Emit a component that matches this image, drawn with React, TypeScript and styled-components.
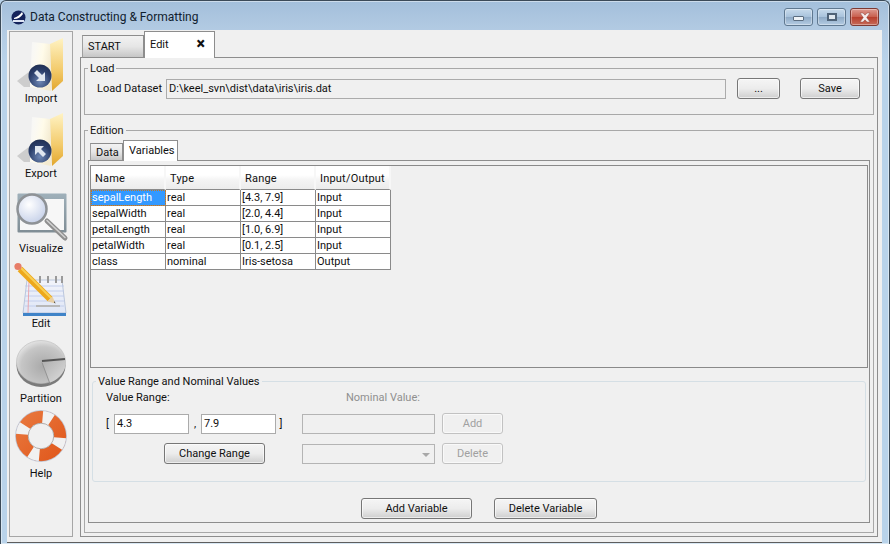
import styled, { createGlobalStyle } from "styled-components";

const FONT = `Roboto, "Noto Sans", "Liberation Sans", sans-serif`;

const GlobalStyle = createGlobalStyle`
  html, body {
    margin: 0;
    padding: 0;
    background: #b9d2e9;
  }
  * {
    box-sizing: border-box;
  }
`;

const Frame = styled.div`
  width: 890px;
  height: 544px;
  overflow: hidden;
  display: flex;
  flex-direction: column;
  font-family: ${FONT};
  font-size: 11px;
  color: #101010;
  background: linear-gradient(180deg, #a3bfdb 0, #b3cbe3 30px, #b9d3ea 60px);
  border: 1px solid #3b4a58;
  border-bottom: 0;
  border-radius: 6px 6px 0 0;
  box-shadow: inset 0 0 0 1px rgba(255, 255, 255, 0.45);
`;

const TitleBar = styled.div`
  height: 29px;
  flex: none;
  display: flex;
  align-items: center;
  padding: 3px 10px 0 10px;
  gap: 4px;
`;

const TitleText = styled.span`
  font-size: 12px;
  color: #10202e;
  flex: 1;
`;

const Caption = styled.div`
  display: flex;
  gap: 4px;
`;

const CaptionButton = styled.div<{ $close?: boolean }>`
  width: 29px;
  height: 18px;
  display: flex;
  align-items: center;
  justify-content: center;
  border: 1px solid ${(p) => (p.$close ? "#7d3a33" : "#5f7890")};
  border-radius: 3px;
  background: ${(p) =>
    p.$close
      ? "linear-gradient(180deg, #dd9a90 0, #c9604f 48%, #b83f2d 52%, #c66a58 100%)"
      : "linear-gradient(180deg, #c8dbec 0, #a9c3dc 48%, #8faac6 52%, #b4cce3 100%)"};
  box-shadow: inset 0 0 0 1px rgba(255, 255, 255, 0.35);
`;

const MinGlyph = styled.div`
  width: 11px;
  height: 5px;
  margin-top: 3px;
  background: #eef3f7;
  border: 1px solid #5b6d80;
  border-radius: 1px;
`;

const MaxGlyph = styled.div`
  width: 10px;
  height: 8px;
  background: #dfe8f0;
  border: 2px solid #4f6378;
`;

const Content = styled.div`
  flex: 1;
  margin: 0 7px 1px 6px;
  background: #f0f0f0;
  display: flex;
  gap: 7px;
  padding: 1px 4px 5px 2px;
  border-bottom: 1px solid #5d5d5d;
  min-height: 0;
`;

const Sidebar = styled.nav`
  width: 64px;
  flex: none;
  border: 1px solid #a6a6a6;
  padding-top: 5px;
  display: flex;
  flex-direction: column;
`;

const SideItem = styled.div`
  height: 75px;
  flex: none;
  display: flex;
  flex-direction: column;
  align-items: center;
`;

const SideIcon = styled.svg`
  width: 58px;
  height: 56px;
  flex: none;
  overflow: visible;
  margin-bottom: -1px;
`;

const SideLabel = styled.span`
  height: 13px;
  line-height: 13px;
`;

const Main = styled.div`
  flex: 1;
  min-width: 0;
  display: flex;
  flex-direction: column;
`;

const TabStrip = styled.div`
  height: 27px;
  flex: none;
  padding-left: 2px;
  display: flex;
  align-items: flex-end;
  margin-bottom: -1px;
  position: relative;
  z-index: 1;
`;

const Tab = styled.div<{ $active?: boolean; $w: number; $h: number }>`
  width: ${(p) => p.$w}px;
  height: ${(p) => p.$h}px;
  display: flex;
  align-items: center;
  justify-content: space-between;
  padding: 0 9px ${(p) => (p.$active ? 2 : 0)}px 5px;
  border: 1px solid #8d8d8d;
  border-bottom: ${(p) => (p.$active ? "0" : "1px solid #8d8d8d")};
  border-left: ${(p) => (p.$active ? "1px solid #8d8d8d" : "1px solid #a0a0a0")};
  background: ${(p) =>
    p.$active ? "#ffffff" : "linear-gradient(180deg, #f2f2f2 0, #e6e6e6 50%, #c6c6c6 100%)"};
`;

const CloseMark = styled.span`
  font-weight: 900;
  font-size: 16px;
  line-height: 1;
`;

const Pane = styled.div`
  flex: 1;
  min-height: 0;
  border: 1px solid #8d8d8d;
  padding: 2px 3px 3px;
  display: flex;
  flex-direction: column;
`;

const Group = styled.fieldset<{ $h?: number }>`
  margin: 0;
  padding: 0;
  min-width: 0;
  border: 1px solid #a8a8a8;
  ${(p) => (p.$h ? `height: ${p.$h}px; flex: none;` : "flex: 1; min-height: 0;")}
`;

const Legend = styled.legend`
  padding: 2px 2px 0;
  margin-left: 3px;
  line-height: 14px;
`;

const LoadRow = styled.div`
  display: flex;
  align-items: center;
  padding: 2px 13px 0 12px;
  height: 23px;
`;

const LoadLabel = styled.label`
  width: 69px;
  flex: none;
  white-space: nowrap;
`;

const PathBox = styled.div`
  flex: 1;
  height: 20px;
  line-height: 18px;
  padding-left: 2px;
  background: #f0f0f0;
  border: 1px solid #ababab;
  margin-right: 11px;
`;

const Button = styled.button<{ $w: number; $disabled?: boolean; $gap?: number }>`
  width: ${(p) => p.$w}px;
  height: 21px;
  flex: none;
  padding: 0;
  margin-right: ${(p) => p.$gap ?? 0}px;
  font-family: ${FONT};
  font-size: 11px;
  color: ${(p) => (p.$disabled ? "#a0a0a0" : "#101010")};
  border: 1px solid ${(p) => (p.$disabled ? "#c2c2c2" : "#777777")};
  border-radius: 3px;
  background: ${(p) =>
    p.$disabled ? "#f0f0f0" : "linear-gradient(180deg, #f5f5f5 0, #ececec 50%, #cfcfcf 100%)"};
  box-shadow: inset 0 0 0 1px rgba(255, 255, 255, 0.6);
`;

const EditionBody = styled.div`
  height: calc(100% - 5px);
  padding: 2px 3px 4px 3px;
  display: flex;
  flex-direction: column;
`;

const InnerStrip = styled.div`
  height: 21px;
  flex: none;
  padding-left: 2px;
  display: flex;
  align-items: flex-end;
  margin-bottom: -1px;
  position: relative;
  z-index: 1;
`;

const InnerPane = styled.div`
  flex: 1;
  min-height: 0;
  border: 1px solid #8d8d8d;
  padding: 4px 1px 0 1px;
  display: flex;
  flex-direction: column;
`;

const TableArea = styled.div`
  height: 203px;
  flex: none;
  border: 1px solid #8a8a8a;
`;

const VarGrid = styled.div`
  display: grid;
  grid-template-columns: repeat(4, 75px);
  grid-template-rows: 24px repeat(5, 16px);
  width: 300px;
`;

const HeadCell = styled.div`
  padding: 0 4px;
  line-height: 25px;
  letter-spacing: 0.2px;
  background: linear-gradient(180deg, #ffffff 0, #ffffff 40%, #f4f4f4 60%, #ececec 100%);
  border-right: 2px solid #f7f7f7;
  border-bottom: 1px solid #8a8a8a;
`;

const Cell = styled.div<{ $selected?: boolean }>`
  line-height: 15px;
  padding-left: 1px;
  background: ${(p) => (p.$selected ? "#3399ff" : "#ffffff")};
  color: ${(p) => (p.$selected ? "#ffffff" : "#101010")};
  border-right: 1px solid #8a8a8a;
  border-bottom: 1px solid #8a8a8a;
  outline: ${(p) => (p.$selected ? "1px dotted #c8761a" : "none")};
  outline-offset: -1px;
`;

const RangeGroup = styled.fieldset`
  margin: 5px 2px 0 2px;
  padding: 0;
  height: 109px;
  flex: none;
  min-width: 0;
  border: 1px solid #d5dfe5;
  border-radius: 3px;
`;

const RangeLegend = styled.legend`
  padding: 2px 2px 0;
  margin-left: 3px;
  line-height: 14px;
`;

const RangeRow = styled.div<{ $h: number; $mt?: number }>`
  height: ${(p) => p.$h}px;
  margin-top: ${(p) => p.$mt ?? 0}px;
  display: flex;
  align-items: center;
  padding-left: 13px;
`;

const FieldLabel = styled.span<{ $w: number; $muted?: boolean }>`
  width: ${(p) => p.$w}px;
  color: ${(p) => (p.$muted ? "#8f8f8f" : "#101010")};
  flex: none;
`;

const Bracket = styled.span<{ $w: number; $align?: string }>`
  width: ${(p) => p.$w}px;
  flex: none;
  text-align: ${(p) => p.$align ?? "center"};
`;

const ValueInput = styled.div`
  width: 75px;
  height: 20px;
  flex: none;
  line-height: 18px;
  padding-left: 2px;
  background: #ffffff;
  border: 1px solid #ababab;
`;

const DisabledField = styled.div`
  width: 133px;
  height: 20px;
  flex: none;
  margin-right: 7px;
  position: relative;
  background: #f0f0f0;
  border: 1px solid #b4b4b4;
`;

const ComboArrow = styled.span`
  position: absolute;
  right: 4px;
  top: 8px;
  width: 0;
  height: 0;
  border-left: 4px solid transparent;
  border-right: 4px solid transparent;
  border-top: 4px solid #a8a8a8;
`;

const Spacer = styled.div<{ $w: number }>`
  width: ${(p) => p.$w}px;
  flex: none;
`;

const GroupGap = styled.div`
  height: 7px;
  flex: none;
`;

const Footer = styled.div`
  display: flex;
  padding: 16px 0 0 271px;
  gap: 22px;
`;

const rows = [
  ["sepalLength", "real", "[4.3, 7.9]", "Input"],
  ["sepalWidth", "real", "[2.0, 4.4]", "Input"],
  ["petalLength", "real", "[1.0, 6.9]", "Input"],
  ["petalWidth", "real", "[0.1, 2.5]", "Input"],
  ["class", "nominal", "Iris-setosa", "Output"],
];

const AppLogo = () => (
  <svg width="15" height="15" viewBox="0 0 15 15">
    <circle cx="7.5" cy="7.5" r="7" fill="#14235c" />
    <path d="M3 8 C6 7 9 5 11 2 L12 4 C10 7 7 9 3 9 Z" fill="#ffffff" />
    <rect x="2" y="10" width="11" height="2" fill="#dfe6f5" />
  </svg>
);

const FolderIcon = ({ top, flip }: { top: number; flip?: boolean }) => {
  const id = flip ? "e" : "i";
  const y = (v: number) => v + top;
  return (
    <SideIcon viewBox={`12 ${top} 58 56`}>
      <defs>
        <linearGradient id={`${id}f`} x1="0" y1="0" x2="0" y2="1">
          <stop offset="0" stopColor="#fff3c4" />
          <stop offset="0.6" stopColor="#f3cb6c" />
          <stop offset="1" stopColor="#e2a62c" />
        </linearGradient>
        <linearGradient id={`${id}p`} x1="0" y1="0" x2="1" y2="0.4">
          <stop offset="0" stopColor="#ffffff" stopOpacity="0.4" />
          <stop offset="0.6" stopColor="#fffbe9" />
          <stop offset="1" stopColor="#f3ead0" />
        </linearGradient>
        <radialGradient id={`${id}c`} cx="0.5" cy="0.75" r="0.8">
          <stop offset="0" stopColor="#6f88b5" />
          <stop offset="0.6" stopColor="#2b3f6b" />
          <stop offset="1" stopColor="#1d2c4e" />
        </radialGradient>
      </defs>
      <path d={`M17 ${y(44)} L30 ${y(34)} L30 ${y(50)} L24 ${y(50)} Z`} fill="#bdbdbd" opacity="0.7" />
      <path d={`M32 ${y(5)} L50 ${y(7)} L51 ${y(54)} L30 ${y(50)} Z`} fill={`url(#${id}p)`} />
      <path d={`M50 ${y(7)} L63 ${y(1)} L63 ${y(44)} L52 ${y(54)} Z`} fill={`url(#${id}f)`} />
      <circle cx="40" cy={y(39)} r="11.5" fill={`url(#${id}c)`} />
      <g transform={`translate(40 ${y(39)}) rotate(${flip ? 180 : 0})`}>
        <path d="M-6 -3 L-3 -6 L2 -1 L5 -4 L5 5 L-4 5 L-1 2 Z" fill="#dfe6ef" />
      </g>
    </SideIcon>
  );
};

const MagnifierIcon = () => (
  <SideIcon viewBox="12 186 58 56">
    <defs>
      <radialGradient id="lens" cx="0.4" cy="0.35" r="0.7">
        <stop offset="0" stopColor="#ffffff" />
        <stop offset="1" stopColor="#c4cfe8" />
      </radialGradient>
      <linearGradient id="win" x1="0" y1="0" x2="0" y2="1">
        <stop offset="0" stopColor="#9fb0ba" />
        <stop offset="1" stopColor="#7f8d95" />
      </linearGradient>
    </defs>
    <rect x="17.5" y="192.5" width="49" height="39" fill="url(#win)" rx="1" />
    <rect x="20" y="198" width="44" height="31" fill="#f7f7f7" />
    <line x1="47" y1="220" x2="65" y2="237" stroke="#8f8f8f" strokeWidth="5" strokeLinecap="round" />
    <line x1="47" y1="219.5" x2="65" y2="236.5" stroke="#d0d0d0" strokeWidth="1.6" strokeLinecap="round" />
    <circle cx="32" cy="208" r="14.5" fill="url(#lens)" stroke="#8e9296" strokeWidth="2.5" />
  </SideIcon>
);

const NotepadIcon = () => (
  <SideIcon viewBox="12 261 58 56">
    <defs>
      <linearGradient id="pad" x1="0" y1="0" x2="0" y2="1">
        <stop offset="0" stopColor="#f2f4fa" />
        <stop offset="1" stopColor="#dfe6f6" />
      </linearGradient>
    </defs>
    <path d="M27 279 L62 279 L66 312 L23 312 Z" fill="url(#pad)" stroke="#a5b4d0" strokeWidth="0.7" />
    <path d="M23 312 L66 312 L66 315 L23 315 Z" fill="#3f83c8" />
    {[285, 290, 295, 300, 305].map((v) => (
      <line key={v} x1="25" y1={v} x2="64" y2={v} stroke="#b9c6ea" strokeWidth="0.8" />
    ))}
    <line x1="29" y1="279" x2="28" y2="312" stroke="#eba0a6" strokeWidth="0.9" />
    {[40, 48, 56, 62].map((v) => (
      <line key={v} x1={v} y1="275" x2={v} y2="282" stroke="#9a9a9a" strokeWidth="2" />
    ))}
    <line x1="36" y1="305" x2="60" y2="305" stroke="#b8b8b8" strokeWidth="2" />
    <line x1="20" y1="268" x2="50" y2="298" stroke="#eda81c" strokeWidth="6.5" />
    <line x1="21" y1="267" x2="51" y2="297" stroke="#f8cf54" strokeWidth="2" />
    <path d="M47.5 300.5 L52.5 295.5 L55.5 302.5 Z" fill="#e8cfa5" />
    <path d="M54 301.5 L55.5 302.5 L54.5 300 Z" fill="#333333" />
    <circle cx="18" cy="265.5" r="3.6" fill="#e77d68" />
  </SideIcon>
);

const PieIcon = () => (
  <SideIcon viewBox="12 336 58 56">
    <defs>
      <radialGradient id="pie" cx="0.55" cy="0.6" r="0.65">
        <stop offset="0" stopColor="#a9a9a9" />
        <stop offset="0.7" stopColor="#c6c6c6" />
        <stop offset="1" stopColor="#ececec" />
      </radialGradient>
      <linearGradient id="slice" x1="0" y1="0" x2="1" y2="1">
        <stop offset="0" stopColor="#aeaeae" />
        <stop offset="1" stopColor="#dedede" />
      </linearGradient>
    </defs>
    <ellipse cx="41" cy="364.5" rx="24.5" ry="21.5" fill="#7b7b7b" />
    <ellipse cx="41" cy="361" rx="24.5" ry="21.5" fill="url(#pie)" stroke="#b8b8b8" strokeWidth="0.6" />
    <path d="M42 361 L65.5 359 A24.5 21.5 0 0 1 50 381.5 Z" fill="url(#slice)" />
    <path d="M42 360 L65 358" stroke="#555555" strokeWidth="2.2" />
    <path d="M42 361.5 L50 383" stroke="#8c8c8c" strokeWidth="0.8" />
  </SideIcon>
);

const BuoyIcon = () => (
  <SideIcon viewBox="12 411 58 56">
    <defs>
      <linearGradient id="ring" x1="0" y1="0" x2="1" y2="1">
        <stop offset="0" stopColor="#e8763c" />
        <stop offset="1" stopColor="#e15a1e" />
      </linearGradient>
    </defs>
    <circle cx="41" cy="435" r="19" fill="none" stroke="url(#ring)" strokeWidth="12.5" />
    {[5, 95, 185, 275].map((a) => (
      <path
        key={a}
        d="M41 409.5 A25.5 25.5 0 0 1 53 412.5 L47 424 A13 13 0 0 0 41 422 Z"
        fill="#f1f1f1"
        transform={`rotate(${a} 41 435)`}
      />
    ))}
    <circle cx="41" cy="435" r="25.5" fill="none" stroke="#9aa7c4" strokeWidth="0.7" opacity="0.7" />
    <circle cx="41" cy="435" r="12.8" fill="#f0f0f0" stroke="#9a9a9a" strokeWidth="0.7" />
  </SideIcon>
);

export default function App() {
  return (
    <>
      <GlobalStyle />
      <Frame>
        <TitleBar>
          <AppLogo />
          <TitleText>Data Constructing &amp; Formatting</TitleText>
          <Caption>
            <CaptionButton>
              <MinGlyph />
            </CaptionButton>
            <CaptionButton>
              <MaxGlyph />
            </CaptionButton>
            <CaptionButton $close>
              <svg width="14" height="11" viewBox="0 0 14 11">
                <path
                  d="M2 1 L5 1 L7 3.2 L9 1 L12 1 L8.7 5.5 L12 10 L9 10 L7 7.8 L5 10 L2 10 L5.3 5.5 Z"
                  fill="#f6eeee"
                  stroke="#8c4a42"
                  strokeWidth="0.5"
                />
              </svg>
            </CaptionButton>
          </Caption>
        </TitleBar>
        <Content>
          <Sidebar>
            <SideItem>
              <FolderIcon top={36} />
              <SideLabel>Import</SideLabel>
            </SideItem>
            <SideItem>
              <FolderIcon top={111} flip />
              <SideLabel>Export</SideLabel>
            </SideItem>
            <SideItem>
              <MagnifierIcon />
              <SideLabel>Visualize</SideLabel>
            </SideItem>
            <SideItem>
              <NotepadIcon />
              <SideLabel>Edit</SideLabel>
            </SideItem>
            <SideItem>
              <PieIcon />
              <SideLabel>Partition</SideLabel>
            </SideItem>
            <SideItem>
              <BuoyIcon />
              <SideLabel>Help</SideLabel>
            </SideItem>
          </Sidebar>
          <Main>
            <TabStrip>
              <Tab $w={62} $h={23}>START</Tab>
              <Tab $active $w={71} $h={27}>
                Edit
                <CloseMark>×</CloseMark>
              </Tab>
            </TabStrip>
            <Pane>
              <Group $h={55}>
                <Legend>Load</Legend>
                <LoadRow>
                  <LoadLabel>Load Dataset</LoadLabel>
                  <PathBox>D:\keel_svn\dist\data\iris\iris.dat</PathBox>
                  <Button $w={43} $gap={20}>...</Button>
                  <Button $w={60}>Save</Button>
                </LoadRow>
              </Group>
              <GroupGap />
              <Group>
                <Legend>Edition</Legend>
                <EditionBody>
                  <InnerStrip>
                    <Tab $w={33} $h={18}>Data</Tab>
                    <Tab $active $w={55} $h={21}>Variables</Tab>
                  </InnerStrip>
                  <InnerPane>
                    <TableArea>
                      <VarGrid>
                        {["Name", "Type", "Range", "Input/Output"].map((h) => (
                          <HeadCell key={h}>{h}</HeadCell>
                        ))}
                        {rows.map((r, i) =>
                          r.map((c, j) => (
                            <Cell key={`${i}-${j}`} $selected={i === 0 && j === 0}>
                              {c}
                            </Cell>
                          ))
                        )}
                      </VarGrid>
                    </TableArea>
                    <RangeGroup>
                      <RangeLegend>Value Range and Nominal Values</RangeLegend>
                      <RangeRow $h={16}>
                        <FieldLabel $w={240}>Value Range:</FieldLabel>
                        <FieldLabel $w={100} $muted>Nominal Value:</FieldLabel>
                      </RangeRow>
                      <RangeRow $h={21} $mt={8}>
                        <Bracket $w={8} $align="left">[</Bracket>
                        <ValueInput>4.3</ValueInput>
                        <Bracket $w={12}>,</Bracket>
                        <ValueInput>7.9</ValueInput>
                        <Bracket $w={10}>]</Bracket>
                        <Spacer $w={16} />
                        <DisabledField />
                        <Button $w={61} $disabled>Add</Button>
                      </RangeRow>
                      <RangeRow $h={21} $mt={9}>
                        <Spacer $w={58} />
                        <Button $w={101}>Change Range</Button>
                        <Spacer $w={37} />
                        <DisabledField>
                          <ComboArrow />
                        </DisabledField>
                        <Button $w={61} $disabled>Delete</Button>
                      </RangeRow>
                    </RangeGroup>
                    <Footer>
                      <Button $w={111}>Add Variable</Button>
                      <Button $w={103}>Delete Variable</Button>
                    </Footer>
                  </InnerPane>
                </EditionBody>
              </Group>
            </Pane>
          </Main>
        </Content>
      </Frame>
    </>
  );
}
